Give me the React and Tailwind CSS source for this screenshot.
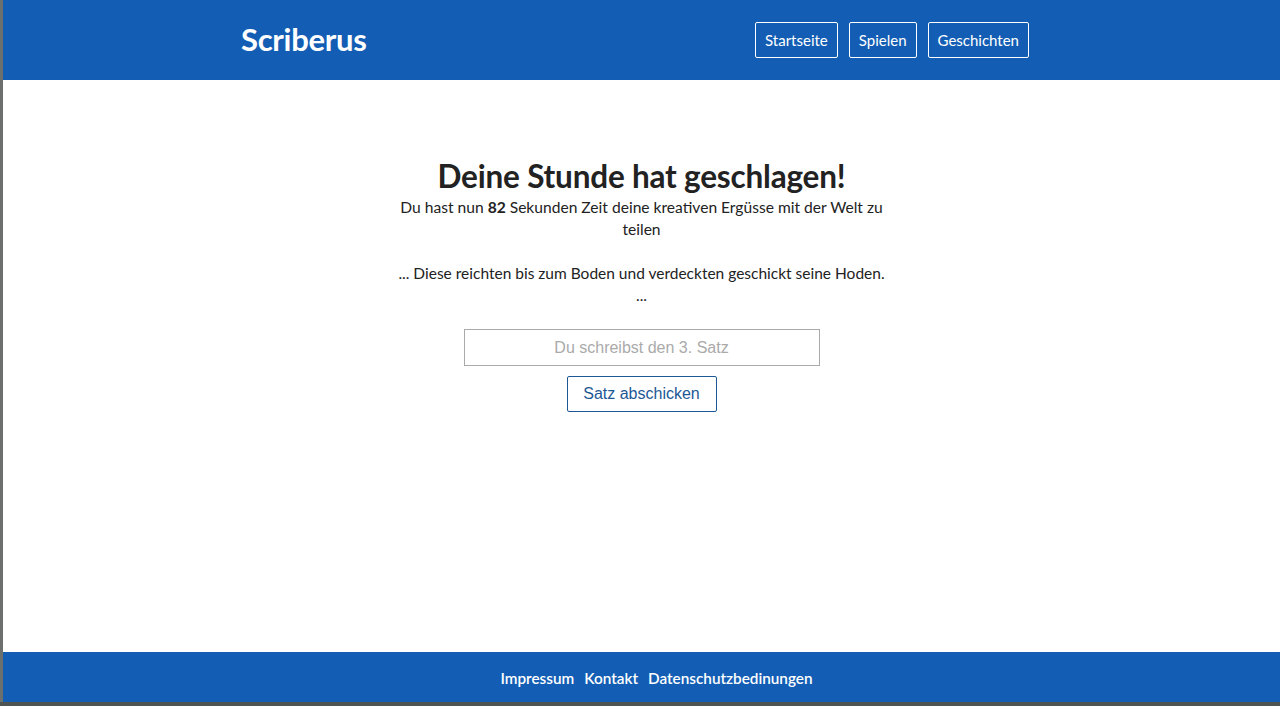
export default function App() {
  const font = { fontFamily: '"Lato", "Noto Sans", sans-serif' };
  return (
    <div className="w-[1280px] h-[706px] bg-[#6b6f6e] flex flex-col overflow-hidden" style={font}>
      <div className="flex-1 flex flex-col ml-[3px] bg-white">
        <header className="h-[80px] bg-[#135eb4] flex items-center justify-between pl-[238px] pr-[251px]">
          <div className="text-white font-bold text-[31px] tracking-[-0.3px] mt-[-2px]">Scriberus</div>
          <nav className="flex gap-[11px]">
            {["Startseite", "Spielen", "Geschichten"].map((t) => (
              <a key={t} className="h-[36px] px-[9px] flex items-center border border-white rounded-[2px] text-white text-[15px]">
                {t}
              </a>
            ))}
          </nav>
        </header>
        <main className="flex-1 flex flex-col items-center pt-[76px] text-[#222]">
          <h1 className="font-bold text-[31.5px] leading-[40px] tracking-[-0.2px]">Deine Stunde hat geschlagen!</h1>
          <p className="w-[500px] text-center text-[15.6px] leading-[22px]">
            Du hast nun <b>82</b> Sekunden Zeit deine kreativen Ergüsse mit der Welt zu teilen
          </p>
          <p className="text-center text-[15.5px] leading-[22px] mt-[22px]">
            ... Diese reichten bis zum Boden und verdeckten geschickt seine Hoden.
            <br />...
          </p>
          <input
            className="mt-[23px] w-[356px] h-[37px] border border-[#aaa] text-center text-[16px] outline-none placeholder:text-[#aaa]"
            style={{ fontFamily: '"Liberation Sans", Arial, sans-serif' }}
            placeholder="Du schreibst den 3. Satz"
          />
          <button
            className="mt-[10px] w-[150px] h-[36px] border border-[#1d5896] rounded-[2px] text-[#1d5896] text-[16px]"
            style={{ fontFamily: '"Liberation Sans", Arial, sans-serif' }}
          >
            Satz abschicken
          </button>
        </main>
        <footer className="h-[50px] bg-[#135eb4] flex items-center justify-center gap-[10px] pl-[30px] text-white text-[15.3px] font-semibold">
          <a className="mt-[2px]">Impressum</a>
          <a className="mt-[2px]">Kontakt</a>
          <a className="mt-[2px]">Datenschutzbedinungen</a>
        </footer>
      </div>
      <div className="h-[4px] bg-[#4f5352]" />
    </div>
  );
}
